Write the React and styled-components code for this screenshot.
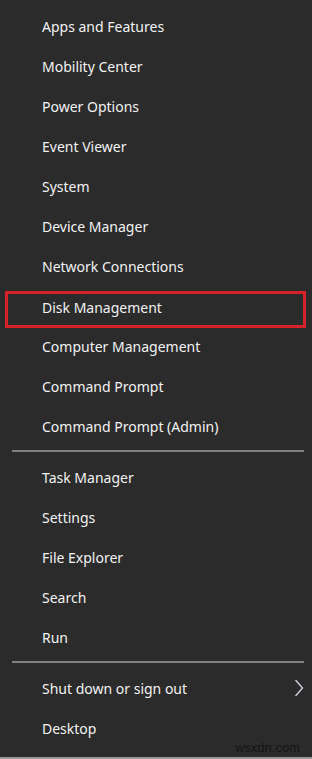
import styled, { createGlobalStyle } from "styled-components";

const Global = createGlobalStyle`
  html, body {
    margin: 0;
    padding: 0;
    background: #2b2b2b;
  }
`;

const Menu = styled.div`
  position: relative;
  width: 312px;
  height: 759px;
  box-sizing: border-box;
  background: #2b2b2b;
  padding-top: 6px;
  font-family: "Noto Sans", "Open Sans", sans-serif;
  border-bottom: 2px solid #9a9a9a;
  overflow: hidden;
`;

const Item = styled.div`
  height: 40px;
  display: flex;
  align-items: center;
  padding: 0 8px 0 42px;
  color: #f2f2f2;
  font-size: 14px;
  box-sizing: border-box;
`;

const HighlightItem = styled(Item)`
  height: 37px;
  margin: 5px 6px -2px 5px;
  padding: 0 0 5px 34px;
  border: 3px solid #d8222b;
`;

const Label = styled.span`
  flex: 1;
`;

const Divider = styled.hr`
  border: none;
  height: 2px;
  background: #808080;
  margin: 4px 8px 5px 12px;
`;

const Watermark = styled.span`
  position: absolute;
  right: 12px;
  bottom: 2px;
  font-family: "Liberation Sans", Arial, sans-serif;
  font-size: 13px;
  color: #141414;
`;

const Chevron = () => (
  <svg width="10" height="18" viewBox="0 0 10 18">
    <path d="M1.5 1 L8.5 9 L1.5 17" fill="none" stroke="#d0d0dc" strokeWidth="1.4" />
  </svg>
);

const group1 = [
  "Apps and Features",
  "Mobility Center",
  "Power Options",
  "Event Viewer",
  "System",
  "Device Manager",
  "Network Connections",
  "Disk Management",
  "Computer Management",
  "Command Prompt",
  "Command Prompt (Admin)",
];
const group2 = ["Task Manager", "Settings", "File Explorer", "Search", "Run"];

export default function App() {
  return (
    <>
      <Global />
      <Menu>
        {group1.map((t) =>
          t === "Disk Management" ? (
            <HighlightItem key={t}>
              <Label>{t}</Label>
            </HighlightItem>
          ) : (
            <Item key={t}>
              <Label>{t}</Label>
            </Item>
          )
        )}
        <Divider />
        {group2.map((t) => (
          <Item key={t}>
            <Label>{t}</Label>
          </Item>
        ))}
        <Divider />
        <Item>
          <Label>Shut down or sign out</Label>
          <Chevron />
        </Item>
        <Item>
          <Label>Desktop</Label>
        </Item>
        <Watermark>wsxdn.com</Watermark>
      </Menu>
    </>
  );
}
